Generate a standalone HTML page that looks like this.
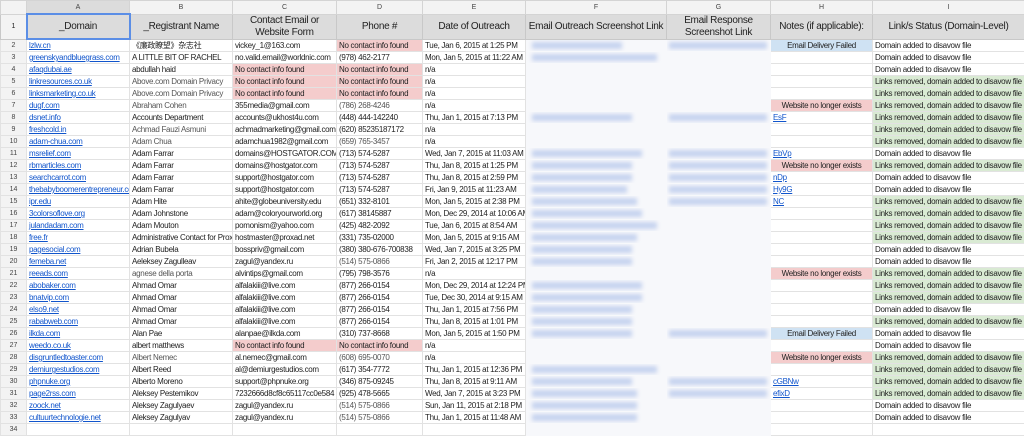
<!DOCTYPE html><html><head><style>
body{margin:0;width:1024px;height:426px;overflow:hidden;background:#fff;font-family:"Liberation Sans",Arial,"Noto Sans CJK SC",sans-serif;}
table{border-collapse:collapse;table-layout:fixed;width:1024px;}
td{border:1px solid #e2e2e2;font-size:8px;letter-spacing:-0.3px;height:11px;padding:0 2px;white-space:nowrap;overflow:hidden;color:#222;line-height:11px;}
tr.l td{height:12px;background:#f3f3f3;color:#444;font-size:7px;letter-spacing:0;text-align:center;border-color:#d4d4d4;}
tr.h td{height:23px;background:#dcdcdc;font-size:10px;text-align:center;line-height:12px;white-space:normal;color:#222;border-color:#c8c8c8;}
td.n{background:#f3f3f3;color:#444;font-size:7px;letter-spacing:0;text-align:center;padding:0;}
a{color:#1155cc;text-decoration:underline;}
.p{background:#f4cccc;}.g{background:#d9ead3;}.b{background:#cfe2f3;text-align:center;}
.pc{background:#f4cccc;text-align:center;}
.g1{color:#555;}
td.f{background:#f7f8fb;border-color:#f7f8fb;padding:0;}
td.f i{display:block;height:7px;background:#c6d3ef;filter:blur(2px);margin-left:6px;}
td.f.gg i{margin-left:2px;width:98px!important;}
</style></head><body>
<table>
<colgroup><col style="width:26px"><col style="width:103px"><col style="width:103px"><col style="width:104px"><col style="width:86px"><col style="width:103px"><col style="width:141px"><col style="width:104px"><col style="width:102px"><col style="width:152px"></colgroup>
<tr class="l"><td></td><td style="background:#dcdcdc">A</td><td>B</td><td>C</td><td>D</td><td>E</td><td>F</td><td>G</td><td>H</td><td>I</td></tr>
<tr class="h"><td style="background:#f3f3f3;font-size:7px">1</td><td style="border:2px solid #5b8ee6">_Domain</td><td>_Registrant Name</td><td>Contact Email or Website Form</td><td>Phone #</td><td>Date of Outreach</td><td style="white-space:nowrap">Email Outreach Screenshot Link</td><td>Email Response Screenshot Link</td><td style="white-space:nowrap">Notes (if applicable):</td><td>Link/s Status (Domain-Level)</td></tr>
<tr><td class="n">2</td><td><a>lzlw.cn</a></td><td>《廉政瞭望》杂志社</td><td>vickey_1@163.com</td><td class="p">No contact info found</td><td>Tue, Jan 6, 2015 at 1:25 PM</td><td class="f"><i style="width:90px"></i></td><td class="f gg"><i></i></td><td class="b">Email Delivery Failed</td><td>Domain added to disavow file</td></tr>
<tr><td class="n">3</td><td><a>greenskyandbluegrass.com</a></td><td>A LITTLE BIT OF RACHEL</td><td>no.valid.email@worldnic.com</td><td>(978) 462-2177</td><td>Mon, Jan 5, 2015 at 11:22 AM</td><td class="f"><i style="width:125px"></i></td><td class="f"></td><td></td><td>Domain added to disavow file</td></tr>
<tr><td class="n">4</td><td><a>afaqdubai.ae</a></td><td>abdullah haid</td><td class="p">No contact info found</td><td class="p">No contact info found</td><td>n/a</td><td class="f"></td><td class="f"></td><td></td><td>Domain added to disavow file</td></tr>
<tr><td class="n">5</td><td><a>linkresources.co.uk</a></td><td class="g1">Above.com Domain Privacy</td><td class="p">No contact info found</td><td class="p">No contact info found</td><td>n/a</td><td class="f"></td><td class="f"></td><td></td><td class="g">Links removed, domain added to disavow file</td></tr>
<tr><td class="n">6</td><td><a>linksmarketing.co.uk</a></td><td class="g1">Above.com Domain Privacy</td><td class="p">No contact info found</td><td class="p">No contact info found</td><td>n/a</td><td class="f"></td><td class="f"></td><td></td><td class="g">Links removed, domain added to disavow file</td></tr>
<tr><td class="n">7</td><td><a>dugf.com</a></td><td class="g1">Abraham Cohen</td><td>355media@gmail.com</td><td class="g1">(786) 268-4246</td><td>n/a</td><td class="f"></td><td class="f"></td><td class="pc">Website no longer exists</td><td class="g">Links removed, domain added to disavow file</td></tr>
<tr><td class="n">8</td><td><a>dsnet.info</a></td><td>Accounts Department</td><td>accounts@ukhost4u.com</td><td>(448) 444-142240</td><td>Thu, Jan 1, 2015 at 7:13 PM</td><td class="f"><i style="width:100px"></i></td><td class="f gg"><i></i></td><td><a>EsF</a></td><td class="g">Links removed, domain added to disavow file</td></tr>
<tr><td class="n">9</td><td><a>freshcold.in</a></td><td class="g1">Achmad Fauzi Asmuni</td><td>achmadmarketing@gmail.com</td><td>(620) 85235187172</td><td>n/a</td><td class="f"></td><td class="f"></td><td></td><td class="g">Links removed, domain added to disavow file</td></tr>
<tr><td class="n">10</td><td><a>adam-chua.com</a></td><td class="g1">Adam Chua</td><td>adamchua1982@gmail.com</td><td class="g1">(659) 765-3457</td><td>n/a</td><td class="f"></td><td class="f"></td><td></td><td class="g">Links removed, domain added to disavow file</td></tr>
<tr><td class="n">11</td><td><a>msrelief.com</a></td><td>Adam Farrar</td><td>domains@HOSTGATOR.COM</td><td>(713) 574-5287</td><td>Wed, Jan 7, 2015 at 11:03 AM</td><td class="f"><i style="width:110px"></i></td><td class="f gg"><i></i></td><td><a>EbVp</a></td><td>Domain added to disavow file</td></tr>
<tr><td class="n">12</td><td><a>rbmarticles.com</a></td><td>Adam Farrar</td><td>domains@hostgator.com</td><td>(713) 574-5287</td><td>Thu, Jan 8, 2015 at 1:25 PM</td><td class="f"><i style="width:100px"></i></td><td class="f gg"><i></i></td><td class="pc">Website no longer exists</td><td class="g">Links removed, domain added to disavow file</td></tr>
<tr><td class="n">13</td><td><a>searchcarrot.com</a></td><td>Adam Farrar</td><td>support@hostgator.com</td><td>(713) 574-5287</td><td>Thu, Jan 8, 2015 at 2:59 PM</td><td class="f"><i style="width:100px"></i></td><td class="f gg"><i></i></td><td><a>nDp</a></td><td>Domain added to disavow file</td></tr>
<tr><td class="n">14</td><td><a>thebabyboomerentrepreneur.com</a></td><td>Adam Farrar</td><td>support@hostgator.com</td><td>(713) 574-5287</td><td>Fri, Jan 9, 2015 at 11:23 AM</td><td class="f"><i style="width:95px"></i></td><td class="f gg"><i></i></td><td><a>Hy9G</a></td><td>Domain added to disavow file</td></tr>
<tr><td class="n">15</td><td><a>ipr.edu</a></td><td>Adam Hite</td><td>ahite@globeuniversity.edu</td><td>(651) 332-8101</td><td>Mon, Jan 5, 2015 at 2:38 PM</td><td class="f"><i style="width:105px"></i></td><td class="f gg"><i></i></td><td><a>NC</a></td><td class="g">Links removed, domain added to disavow file</td></tr>
<tr><td class="n">16</td><td><a>3colorsoflove.org</a></td><td>Adam Johnstone</td><td>adam@coloryourworld.org</td><td>(617) 38145887</td><td>Mon, Dec 29, 2014 at 10:06 AM</td><td class="f"><i style="width:110px"></i></td><td class="f"></td><td></td><td class="g">Links removed, domain added to disavow file</td></tr>
<tr><td class="n">17</td><td><a>julandadam.com</a></td><td>Adam Mouton</td><td>pomonism@yahoo.com</td><td>(425) 482-2092</td><td>Tue, Jan 6, 2015 at 8:54 AM</td><td class="f"><i style="width:125px"></i></td><td class="f"></td><td></td><td class="g">Links removed, domain added to disavow file</td></tr>
<tr><td class="n">18</td><td><a>free.fr</a></td><td>Administrative Contact for Proxad</td><td>hostmaster@proxad.net</td><td>(331) 735-02000</td><td>Mon, Jan 5, 2015 at 9:15 AM</td><td class="f"><i style="width:105px"></i></td><td class="f"></td><td></td><td class="g">Links removed, domain added to disavow file</td></tr>
<tr><td class="n">19</td><td><a>pagesocial.com</a></td><td>Adrian Bubela</td><td>bosspriv@gmail.com</td><td>(380) 380-676-700838</td><td>Wed, Jan 7, 2015 at 3:25 PM</td><td class="f"><i style="width:100px"></i></td><td class="f"></td><td></td><td>Domain added to disavow file</td></tr>
<tr><td class="n">20</td><td><a>femeba.net</a></td><td>Aeleksey Zagulleav</td><td>zagul@yandex.ru</td><td class="g1">(514) 575-0866</td><td>Fri, Jan 2, 2015 at 12:17 PM</td><td class="f"><i style="width:100px"></i></td><td class="f"></td><td></td><td>Domain added to disavow file</td></tr>
<tr><td class="n">21</td><td><a>reeads.com</a></td><td class="g1">agnese della porta</td><td>alvintips@gmail.com</td><td>(795) 798-3576</td><td>n/a</td><td class="f"></td><td class="f"></td><td class="pc">Website no longer exists</td><td class="g">Links removed, domain added to disavow file</td></tr>
<tr><td class="n">22</td><td><a>abobaker.com</a></td><td>Ahmad Omar</td><td>alfalakiii@live.com</td><td>(877) 266-0154</td><td>Mon, Dec 29, 2014 at 12:24 PM</td><td class="f"><i style="width:110px"></i></td><td class="f"></td><td></td><td class="g">Links removed, domain added to disavow file</td></tr>
<tr><td class="n">23</td><td><a>bnatvip.com</a></td><td>Ahmad Omar</td><td>alfalakiii@live.com</td><td>(877) 266-0154</td><td>Tue, Dec 30, 2014 at 9:15 AM</td><td class="f"><i style="width:110px"></i></td><td class="f"></td><td></td><td class="g">Links removed, domain added to disavow file</td></tr>
<tr><td class="n">24</td><td><a>elso9.net</a></td><td>Ahmad Omar</td><td>alfalakiii@live.com</td><td>(877) 266-0154</td><td>Thu, Jan 1, 2015 at 7:56 PM</td><td class="f"><i style="width:100px"></i></td><td class="f"></td><td></td><td>Domain added to disavow file</td></tr>
<tr><td class="n">25</td><td><a>rababweb.com</a></td><td>Ahmad Omar</td><td>alfalakiii@live.com</td><td>(877) 266-0154</td><td>Thu, Jan 8, 2015 at 1:01 PM</td><td class="f"><i style="width:100px"></i></td><td class="f"></td><td></td><td class="g">Links removed, domain added to disavow file</td></tr>
<tr><td class="n">26</td><td><a>ilkda.com</a></td><td>Alan Pae</td><td>alanpae@ilkda.com</td><td>(310) 737-8668</td><td>Mon, Jan 5, 2015 at 1:50 PM</td><td class="f"><i style="width:100px"></i></td><td class="f gg"><i></i></td><td class="b">Email Delivery Failed</td><td>Domain added to disavow file</td></tr>
<tr><td class="n">27</td><td><a>weedo.co.uk</a></td><td>albert matthews</td><td class="p">No contact info found</td><td class="p">No contact info found</td><td>n/a</td><td class="f"></td><td class="f"></td><td></td><td>Domain added to disavow file</td></tr>
<tr><td class="n">28</td><td><a>disgruntledtoaster.com</a></td><td class="g1">Albert Nemec</td><td>al.nemec@gmail.com</td><td class="g1">(608) 695-0070</td><td>n/a</td><td class="f"></td><td class="f"></td><td class="pc">Website no longer exists</td><td class="g">Links removed, domain added to disavow file</td></tr>
<tr><td class="n">29</td><td><a>demiurgestudios.com</a></td><td>Albert Reed</td><td>al@demiurgestudios.com</td><td>(617) 354-7772</td><td>Thu, Jan 1, 2015 at 12:36 PM</td><td class="f"><i style="width:125px"></i></td><td class="f"></td><td></td><td class="g">Links removed, domain added to disavow file</td></tr>
<tr><td class="n">30</td><td><a>phpnuke.org</a></td><td>Alberto Moreno</td><td>support@phpnuke.org</td><td>(346) 875-09245</td><td>Thu, Jan 8, 2015 at 9:11 AM</td><td class="f"><i style="width:100px"></i></td><td class="f gg"><i></i></td><td><a>cGBNw</a></td><td class="g">Links removed, domain added to disavow file</td></tr>
<tr><td class="n">31</td><td><a>page2rss.com</a></td><td>Aleksey Pestemikov</td><td>7232666d8cf8c65117cc0e584</td><td>(925) 478-5665</td><td>Wed, Jan 7, 2015 at 3:23 PM</td><td class="f"><i style="width:105px"></i></td><td class="f gg"><i></i></td><td><a>efixD</a></td><td class="g">Links removed, domain added to disavow file</td></tr>
<tr><td class="n">32</td><td><a>zoock.net</a></td><td>Aleksey Zagulyaev</td><td>zagul@yandex.ru</td><td class="g1">(514) 575-0866</td><td>Sun, Jan 11, 2015 at 2:18 PM</td><td class="f"><i style="width:105px"></i></td><td class="f"></td><td></td><td>Domain added to disavow file</td></tr>
<tr><td class="n">33</td><td><a>cultuurtechnologie.net</a></td><td>Aleksey Zagulyav</td><td>zagul@yandex.ru</td><td class="g1">(514) 575-0866</td><td>Thu, Jan 1, 2015 at 11:48 AM</td><td class="f"><i style="width:105px"></i></td><td class="f"></td><td></td><td>Domain added to disavow file</td></tr>
<tr><td class="n">34</td><td></td><td></td><td></td><td></td><td></td><td class="f"></td><td class="f"></td><td></td><td></td></tr>
</table>
</body></html>
